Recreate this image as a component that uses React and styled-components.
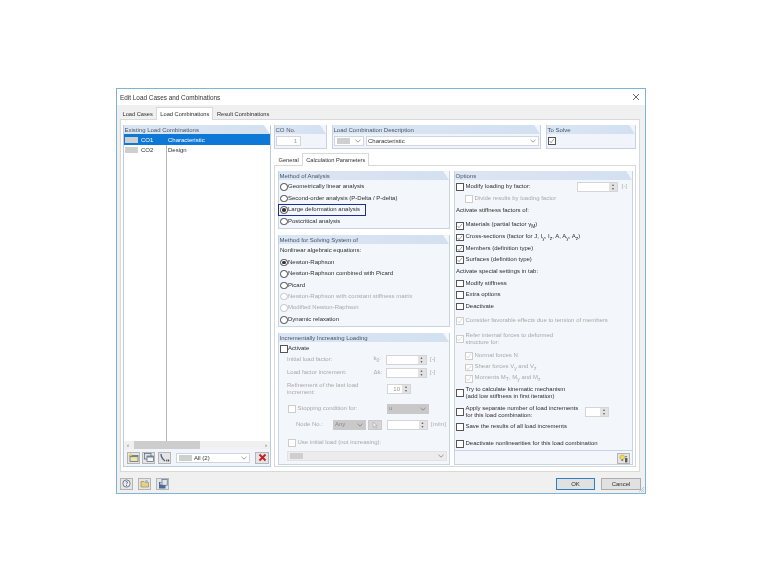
import React from "react";
import styled, { createGlobalStyle } from "styled-components";

const GlobalStyle = createGlobalStyle`
  html, body { margin: 0; padding: 0; background: #fff; }
  body {
    padding: 88px 0 0 116px;
    font-family: "Liberation Sans", Arial, sans-serif;
    font-size: 6px;
    color: #2e2e2e;
  }
`;

const Window = styled.div`
  position: relative;
  box-sizing: border-box;
  width: 530px;
  height: 406px;
  border: 1px solid #7db4d8;
  background: #f0f0f0;
  display: flex;
  flex-direction: column;
  filter: blur(0.25px);
`;

const TitleBar = styled.div`
  height: 16px;
  flex: none;
  background: #fff;
  display: flex;
  align-items: center;
  justify-content: space-between;
  padding: 0 5px 0 3px;
  font-size: 6.4px;
  color: #333;
`;

const TabStrip = styled.div`
  height: 14px;
  flex: none;
  display: flex;
  align-items: flex-end;
  padding-left: 2px;
`;

const Tab = styled.div`
  box-sizing: border-box;
  height: ${(p) => (p.$active ? "13px" : "11px")};
  padding: 0 ${(p) => (p.$active ? "3px" : "2.5px")};
  display: flex;
  align-items: center;
  font-size: 5.7px;
  background: ${(p) => (p.$active ? "#fff" : "transparent")};
  border: 1px solid ${(p) => (p.$active ? "#d9d9d9" : "transparent")};
  border-bottom: none;
  white-space: nowrap;
  margin-bottom: ${(p) => (p.$active ? "-1px" : "0")};
  position: relative;
  z-index: 1;
`;

const Page = styled.div`
  box-sizing: border-box;
  height: 353px;
  flex: none;
  margin: 0 5px 0 3px;
  background: #fff;
  border: 1px solid #d9d9d9;
  padding: 5px 3px 0 2px;
  display: flex;
  gap: 3px;
`;

const LeftPanel = styled.div`
  box-sizing: border-box;
  width: 148px;
  height: 342px;
  flex: none;
  border: 1px solid #bccbe2;
  border-top: none;
  display: flex;
  flex-direction: column;
`;

const Head = styled.div`
  box-sizing: border-box;
  height: 9px;
  flex: none;
  padding-left: 0.5px;
  display: flex;
  align-items: center;
  white-space: nowrap;
  color: #44546a;
  background: linear-gradient(90deg, #dbe6f3, #d3e0f0);
  clip-path: polygon(0 0, calc(100% - 6px) 0, 100% 100%, 0 100%);
`;

const List = styled.div`
  flex: 1;
  background: linear-gradient(90deg, #fff 42px, #b5b5b5 42px, #b5b5b5 43px, #fff 43px);
`;

const ListRow = styled.div`
  height: ${(p) => (p.$selected ? 11 : 10)}px;
  display: flex;
  align-items: center;
  background: ${(p) => (p.$selected ? "#0d78d6" : "transparent")};
  color: ${(p) => (p.$selected ? "#fff" : "#333")};
`;

const Swatch = styled.span`
  display: inline-block;
  flex: none;
  width: 13px;
  height: 6px;
  background: #cfcfcf;
  margin: 0 2px 0 1px;
`;

const IdCell = styled.span`
  width: 25px;
  flex: none;
  padding-left: 1px;
`;

const NameCell = styled.span`
  padding-left: 2px;
`;

const Scrollbar = styled.div`
  height: 8px;
  flex: none;
  background: #f0f0f0;
  display: flex;
  align-items: center;
  justify-content: space-between;
  position: relative;
  padding: 0 3px;
  color: #555;
`;

const Thumb = styled.div`
  position: absolute;
  left: 10px;
  top: 0;
  width: 66px;
  height: 8px;
  background: #cdcdcd;
`;

const ToolRow = styled.div`
  height: 17px;
  flex: none;
  display: flex;
  align-items: center;
  padding: 0 2px 0 3px;
  gap: 2px;
  background: #f1f5fb;
`;

const IconBtn = styled.div`
  box-sizing: border-box;
  width: ${(p) => p.$w || 13}px;
  height: ${(p) => p.$hh || 12}px;
  flex: none;
  border: 1px solid ${(p) => (p.$off ? "#c9c9c9" : "#b5b5b5")};
  background: ${(p) => (p.$off ? "#d5d5d5" : "#e4e4e4")};
  display: flex;
  align-items: center;
  justify-content: center;
  margin-left: ${(p) => p.$ml || 0}px;
`;

const Combo = styled.div`
  box-sizing: border-box;
  width: ${(p) => (p.$w ? `${p.$w}px` : "auto")};
  height: ${(p) => p.$hh || 10}px;
  flex: ${(p) => (p.$w ? "none" : "1")};
  background: ${(p) => (p.$off ? "#c9c9c9" : p.$muted ? "#ececec" : "#fff")};
  border: 1px solid ${(p) => (p.$off ? "#c9c9c9" : p.$muted ? "#e2e2e2" : "#cfd6e0")};
  display: flex;
  align-items: center;
  padding: 0 2px 0 1px;
  color: ${(p) => (p.$off ? "#8a8a8a" : "#333")};
  margin-left: ${(p) => p.$ml || 0}px;
`;

const Chevron = styled.svg`
  margin-left: auto;
  flex: none;
`;

const RightCol = styled.div`
  flex: 1;
  min-width: 0;
  display: flex;
  flex-direction: column;
`;

const TopRow = styled.div`
  display: flex;
  gap: 5px;
  height: 24px;
  flex: none;
`;

const TopBox = styled.div`
  box-sizing: border-box;
  width: ${(p) => p.$w}px;
  flex: none;
  height: 24px;
  display: flex;
  flex-direction: column;
  background: #f1f5fb;
  border: 1px solid #c6d3e6;
  border-top: none;
`;

const TopBody = styled.div`
  flex: 1;
  display: flex;
  align-items: center;
  padding: 0 1px;
  gap: 2px;
`;

const NumberBox = styled.div`
  box-sizing: border-box;
  width: 25px;
  height: 10px;
  background: #fff;
  border: 1px solid #d5d5d5;
  color: #999;
  text-align: right;
  padding-right: 3px;
  line-height: 8px;
`;

const InnerTabs = styled.div`
  height: 16px;
  flex: none;
  display: flex;
  align-items: flex-end;
  padding-left: 1px;
`;

const InnerPanel = styled.div`
  box-sizing: border-box;
  width: 362px;
  height: 302px;
  flex: none;
  border: 1px solid #d9d9d9;
  padding: 5px 2px 0 3px;
  display: grid;
  grid-template-columns: 172px 179px;
  column-gap: 4px;
`;

const Column = styled.div`
  display: flex;
  flex-direction: column;
  gap: 6px;
  min-width: 0;
`;

const Group = styled.div`
  box-sizing: border-box;
  height: ${(p) => p.$h}px;
  flex: none;
  display: flex;
  flex-direction: column;
  background: #f3f6fb;
  border: 1px solid #c6d3e6;
  border-top: none;
`;

const GroupBody = styled.div`
  flex: 1;
  display: flex;
  flex-direction: column;
  padding: 1px 1px 0 1px;
`;

const Row = styled.div`
  box-sizing: border-box;
  height: ${(p) => p.$h || 12}px;
  flex: none;
  display: flex;
  align-items: center;
  gap: ${(p) => (p.$tight ? 0.5 : 1.5)}px;
  white-space: nowrap;
  line-height: 7.5px;
  padding-left: ${(p) => p.$indent || 0}px;
  margin-top: ${(p) => p.$mt || 0}px;
  color: ${(p) => (p.$off ? "#a9a9a9" : "#2e2e2e")};
`;

const Focus = styled.span`
  display: inline-flex;
  align-items: center;
  gap: 0.5px;
  height: 10px;
  outline: 1.2px solid #1b2f8f;
  padding-left: 1px;
  margin-left: -1px;
  width: 86px;
  box-sizing: border-box;
`;

const RadioMark = styled.span`
  box-sizing: border-box;
  width: 7.5px;
  height: 7.5px;
  flex: none;
  border-radius: 50%;
  border: 0.7px solid ${(p) => (p.$off ? "#c4c4c4" : "#444")};
  background: #fff;
  display: flex;
  align-items: center;
  justify-content: center;
  &::after {
    content: "";
    width: 3.6px;
    height: 3.6px;
    border-radius: 50%;
    background: ${(p) => (p.$on ? "#333" : "transparent")};
  }
`;

const CheckMark = styled.span`
  box-sizing: border-box;
  width: 7.5px;
  height: 7.5px;
  flex: none;
  border: 0.7px solid ${(p) => (p.$off ? "#cdcdcd" : "#555")};
  background: #fff;
  color: ${(p) => (p.$off ? "#bbb" : "#555")};
  display: flex;
  align-items: center;
  justify-content: center;
  margin-right: ${(p) => (p.$tight ? 0 : 0.5)}px;
`;

const Spin = styled.div`
  box-sizing: border-box;
  width: ${(p) => p.$w || 41}px;
  height: 10px;
  flex: none;
  display: flex;
  background: #fff;
  border: 1px solid #d5d5d5;
  color: #999;
  margin-left: ${(p) => p.$ml || 0}px;
`;

const SpinValue = styled.span`
  flex: 1;
  text-align: right;
  padding-right: 2px;
  line-height: 8px;
`;

const SpinArrows = styled.span`
  width: 8px;
  flex: none;
  background: #e2e2e2;
  color: #666;
  font-size: 3.5px;
  line-height: 4px;
  text-align: center;
`;

const Unit = styled.span`
  color: #a9a9a9;
  margin-left: 2px;
`;

const Label = styled.span`
  width: ${(p) => p.$w}px;
  flex: none;
  display: ${(p) => (p.$inline ? "flex" : "block")};
  align-items: center;
  gap: 1.5px;
`;

const GroupFoot = styled.div`
  height: 14px;
  flex: none;
  margin-top: auto;
  border-top: 1px solid #c6d3e6;
  display: flex;
  align-items: center;
  justify-content: flex-end;
  padding-right: 2px;
`;

const Footer = styled.div`
  flex: 1;
  display: flex;
  align-items: center;
  padding: 2px 3px 0;
  gap: 5px;
`;

const Button = styled.div`
  box-sizing: border-box;
  width: ${(p) => p.$w || 40}px;
  height: 12px;
  display: flex;
  align-items: center;
  justify-content: center;
  background: #e1e1e1;
  border: 1px solid ${(p) => (p.$primary ? "#2b7fc4" : "#adadad")};
  margin-left: ${(p) => p.$ml || 0}px;
`;

const Grip = styled.svg`
  position: absolute;
  right: 0;
  bottom: 0;
`;

const Tick = () => (
  <svg width="6" height="6" viewBox="0 0 6 6">
    <path d="M0.6 3 L2.2 4.9 L5.6 0.5" fill="none" stroke="currentColor" strokeWidth="0.6" />
  </svg>
);

const Check = ({ on, off, tight }) => (
  <CheckMark $off={off} $tight={tight}>
    {on && <Tick />}
  </CheckMark>
);

const Down = () => (
  <Chevron width="6" height="4" viewBox="0 0 6 4">
    <path d="M0.5 0.8 L3 3.2 L5.5 0.8" fill="none" stroke="#777" strokeWidth="0.7" />
  </Chevron>
);

const Spinner = ({ w, value, ml }) => (
  <Spin $w={w} $ml={ml}>
    <SpinValue>{value}</SpinValue>
    <SpinArrows>▲<br />▼</SpinArrows>
  </Spin>
);

const RadioRow = ({ on, off, focus, children, h }) =>
  focus ? (
    <Row $h={h}>
      <Focus>
        <RadioMark $on={on} />
        {children}
      </Focus>
    </Row>
  ) : (
    <Row $h={h} $off={off} $tight>
      <RadioMark $on={on} $off={off} />
      {children}
    </Row>
  );

const CheckRow = ({ on, off, indent, h, mt, children }) => (
  <Row $h={h} $mt={mt} $off={off} $indent={indent}>
    <Check on={on} off={off} />
    <span>{children}</span>
  </Row>
);

const FolderNew = () => (
  <svg width="10" height="9" viewBox="0 0 10 9">
    <rect x="1" y="2.5" width="8" height="6" fill="#f3e3a4" stroke="#55606e" strokeWidth="0.7" />
    <rect x="1" y="2.5" width="8" height="1.6" fill="#6f8399" />
    <circle cx="1.8" cy="1.6" r="1.3" fill="#f4d94e" />
  </svg>
);

const Windows = () => (
  <svg width="10" height="9" viewBox="0 0 10 9">
    <rect x="0.5" y="0.5" width="6.5" height="5.5" fill="#dfe6ee" stroke="#55606e" strokeWidth="0.7" />
    <rect x="3" y="3" width="6.5" height="5.5" fill="#f6f6f6" stroke="#55606e" strokeWidth="0.7" />
    <rect x="3" y="3" width="6.5" height="1.5" fill="#6f8399" />
  </svg>
);

const Load = () => (
  <svg width="11" height="10" viewBox="0 0 11 10">
    <path d="M2 1 C2 4 3.5 6 6 8" fill="none" stroke="#4c6078" strokeWidth="1.3" />
    <rect x="7.2" y="6.6" width="1.2" height="1.8" fill="#444" />
    <rect x="9" y="6.6" width="1.2" height="1.8" fill="#444" />
  </svg>
);

const Cross = () => (
  <svg width="9" height="9" viewBox="0 0 9 9">
    <path d="M1.5 1.5 L7.5 7.5 M7.5 1.5 L1.5 7.5" stroke="#c4202a" strokeWidth="1.9" />
  </svg>
);

const HelpIcon = () => (
  <svg width="9" height="9" viewBox="0 0 9 9">
    <circle cx="4.5" cy="4.5" r="3.6" fill="#eef1f5" stroke="#55606e" strokeWidth="0.8" />
    <path d="M3.4 3.2 C3.8 2.2 5.6 2.4 5.5 3.5 C5.4 4.3 4.5 4.3 4.4 5.4" fill="none" stroke="#2e4f83" strokeWidth="0.8" />
    <rect x="4" y="6" width="0.9" height="0.9" fill="#2e4f83" />
  </svg>
);

const OpenIcon = () => (
  <svg width="10" height="9" viewBox="0 0 10 9">
    <path d="M1 2.5 H4 L5 3.5 H8.5 V8 H1 Z" fill="#e9d27c" stroke="#8b8256" strokeWidth="0.6" />
    <circle cx="6.5" cy="2.4" r="1.5" fill="#9fb5cf" />
  </svg>
);

const SaveIcon = () => (
  <svg width="10" height="10" viewBox="0 0 10 10">
    <rect x="1" y="3" width="6.5" height="6.5" fill="#4a6a9c" />
    <rect x="2.4" y="3.4" width="3.6" height="2.2" fill="#eef1f5" />
    <rect x="4" y="0.6" width="5.2" height="5.6" fill="#dfe6ee" stroke="#4a5a70" strokeWidth="0.6" />
  </svg>
);

const DefaultsIcon = () => (
  <svg width="10" height="9" viewBox="0 0 10 9">
    <circle cx="3.3" cy="3.2" r="2.3" fill="#f4dc4e" stroke="#a08d2a" strokeWidth="0.4" />
    <rect x="2.4" y="5.4" width="1.8" height="1.6" fill="#777" />
    <rect x="6.4" y="2" width="1.2" height="1.2" fill="#444" />
    <rect x="6" y="4" width="2.4" height="4.4" fill="#5a5a5a" />
  </svg>
);

const PickIcon = () => (
  <svg width="8" height="8" viewBox="0 0 8 8">
    <path d="M2 1 L2 6.5 L3.4 5.2 L4.6 7.4 L5.6 6.9 L4.4 4.8 L6.2 4.6 Z" fill="#eee" stroke="#999" strokeWidth="0.5" />
  </svg>
);

const analysis = [
  { label: "Geometrically linear analysis", h: 12 },
  { label: "Second-order analysis (P-Delta / P-delta)", h: 11 },
  { label: "Large deformation analysis", on: true, focus: true, h: 12 },
  { label: "Postcritical analysis", h: 11 },
];

const solvers = [
  { label: "Newton-Raphson", on: true, h: 11 },
  { label: "Newton-Raphson combined with Picard", h: 12 },
  { label: "Picard", h: 11 },
  { label: "Newton-Raphson with constant stiffness matrix", off: true, h: 11 },
  { label: "Modified Newton-Raphson", off: true, h: 12 },
  { label: "Dynamic relaxation", h: 12 },
];

function App() {
  return (
    <>
      <GlobalStyle />
      <Window>
        <TitleBar>
          <span>Edit Load Cases and Combinations</span>
          <svg width="8" height="8" viewBox="0 0 8 8">
            <path d="M1 1 L7 7 M7 1 L1 7" stroke="#444" strokeWidth="0.8" />
          </svg>
        </TitleBar>
        <TabStrip>
          <Tab>Load Cases</Tab>
          <Tab $active>Load Combinations</Tab>
          <Tab>Result Combinations</Tab>
        </TabStrip>
        <Page>
          <LeftPanel>
            <Head>Existing Load Combinations</Head>
            <List>
              <ListRow $selected>
                <Swatch />
                <IdCell>CO1</IdCell>
                <NameCell>Characteristic</NameCell>
              </ListRow>
              <ListRow>
                <Swatch />
                <IdCell>CO2</IdCell>
                <NameCell>Design</NameCell>
              </ListRow>
            </List>
            <Scrollbar>
              <Thumb />
              <span>‹</span>
              <span>›</span>
            </Scrollbar>
            <ToolRow>
              <IconBtn><FolderNew /></IconBtn>
              <IconBtn><Windows /></IconBtn>
              <IconBtn $ml={1}><Load /></IconBtn>
              <Combo $w={74} $ml={3}>
                <Swatch />
                All (2)
                <Down />
              </Combo>
              <IconBtn $w={14} $ml={3}><Cross /></IconBtn>
            </ToolRow>
          </LeftPanel>
          <RightCol>
            <TopRow>
              <TopBox $w={53}>
                <Head>CO No.</Head>
                <TopBody><NumberBox>1</NumberBox></TopBody>
              </TopBox>
              <TopBox $w={209}>
                <Head>Load Combination Description</Head>
                <TopBody>
                  <Combo $w={30}><Swatch /><Down /></Combo>
                  <Combo>Characteristic<Down /></Combo>
                </TopBody>
              </TopBox>
              <TopBox $w={90}>
                <Head>To Solve</Head>
                <TopBody><Check on /></TopBody>
              </TopBox>
            </TopRow>
            <InnerTabs>
              <Tab>General</Tab>
              <Tab $active>Calculation Parameters</Tab>
            </InnerTabs>
            <InnerPanel>
              <Column>
                <Group $h={58}>
                  <Head>Method of Analysis</Head>
                  <GroupBody>
                    {analysis.map((a) => (
                      <RadioRow key={a.label} on={a.on} focus={a.focus} h={a.h}>{a.label}</RadioRow>
                    ))}
                  </GroupBody>
                </Group>
                <Group $h={92}>
                  <Head>Method for Solving System of</Head>
                  <GroupBody>
                    <Row>Nonlinear algebraic equations:</Row>
                    {solvers.map((s) => (
                      <RadioRow key={s.label} on={s.on} off={s.off} h={s.h}>{s.label}</RadioRow>
                    ))}
                  </GroupBody>
                </Group>
                <Group $h={132}>
                  <Head>Incrementally Increasing Loading</Head>
                  <GroupBody>
                    <Row $tight>
                      <Check tight />
                      <span>Activate</span>
                    </Row>
                    <Row $off $h={10} $indent={7}>
                      <Label $w={85}>Initial load factor:</Label>
                      <Label $w={10.5}>k<sub>0</sub>:</Label>
                      <Spinner />
                      <Unit>[-]</Unit>
                    </Row>
                    <Row $off $mt={2} $indent={7}>
                      <Label $w={85}>Load factor increment:</Label>
                      <Label $w={10.5}>Δk:</Label>
                      <Spinner />
                      <Unit>[-]</Unit>
                    </Row>
                    <Row $off $h={16} $mt={2} $indent={7}>
                      <Label $w={98.5}>Refinement of the last load<br />increment:</Label>
                      <Spinner w={24} value="10" />
                    </Row>
                    <Row $off $mt={6} $indent={8}>
                      <Label $inline $w={97.5}>
                        <Check off />
                        <span>Stopping condition for:</span>
                      </Label>
                      <Combo $off $w={42}>u<Down /></Combo>
                    </Row>
                    <Row $off $h={14} $mt={3} $indent={16}>
                      <Label $w={35.5}>Node No.:</Label>
                      <Combo $off $w={33}>Any<Down /></Combo>
                      <IconBtn $off $w={14} $hh={10}><PickIcon /></IconBtn>
                      <Spinner w={41} ml={3.5} />
                      <Unit>[m/m]</Unit>
                    </Row>
                    <CheckRow off indent={8} mt={5}>Use initial load (not increasing):</CheckRow>
                    <Row $off $mt={1} $indent={7}>
                      <Combo $muted $w={160}>
                        <Swatch />
                        <Down />
                      </Combo>
                    </Row>
                  </GroupBody>
                </Group>
              </Column>
              <Column>
                <Group $h={294}>
                  <Head>Options</Head>
                  <GroupBody>
                    <Row>
                      <Check />
                      <Label $w={110}>Modify loading by factor:</Label>
                      <Spinner />
                      <Unit>[-]</Unit>
                    </Row>
                    <CheckRow off indent={9}>Divide results by loading factor</CheckRow>
                    <Row>Activate stiffness factors of:</Row>
                    <CheckRow on mt={3}>Materials (partial factor γ<sub>M</sub>)</CheckRow>
                    <CheckRow on h={11}>Cross-sections (factor for J, I<sub>y</sub>, I<sub>z</sub>, A, A<sub>y</sub>, A<sub>z</sub>)</CheckRow>
                    <CheckRow on h={11}>Members (definition type)</CheckRow>
                    <CheckRow on>Surfaces (definition type)</CheckRow>
                    <Row>Activate special settings in tab:</Row>
                    <CheckRow h={11}>Modify stiffness</CheckRow>
                    <CheckRow>Extra options</CheckRow>
                    <CheckRow h={11}>Deactivate</CheckRow>
                    <CheckRow on off mt={3}>Consider favorable effects due to tension of members</CheckRow>
                    <CheckRow on off h={16} mt={4}>Refer internal forces to deformed<br />structure for:</CheckRow>
                    <CheckRow on off indent={9} mt={3}>Normal forces N</CheckRow>
                    <CheckRow on off indent={9} h={11}>Shear forces V<sub>y</sub> and V<sub>z</sub></CheckRow>
                    <CheckRow on off indent={9}>Moments M<sub>T</sub>, M<sub>y</sub> and M<sub>z</sub></CheckRow>
                    <CheckRow h={16}>Try to calculate kinematic mechanism<br />(add low stiffness in first iteration)</CheckRow>
                    <Row $h={16} $mt={3}>
                      <Check />
                      <Label $w={118}>Apply separate number of load increments<br />for this load combination:</Label>
                      <Spinner w={24} />
                    </Row>
                    <CheckRow mt={1}>Save the results of all load increments</CheckRow>
                    <CheckRow mt={5}>Deactivate nonlinearities for this load combination</CheckRow>
                  </GroupBody>
                  <GroupFoot>
                    <IconBtn $w={13} $hh={11}><DefaultsIcon /></IconBtn>
                  </GroupFoot>
                </Group>
              </Column>
            </InnerPanel>
          </RightCol>
        </Page>
        <Footer>
          <IconBtn><HelpIcon /></IconBtn>
          <IconBtn><OpenIcon /></IconBtn>
          <IconBtn><SaveIcon /></IconBtn>
          <Button $primary $w={39} $ml={382}>OK</Button>
          <Button $ml={1}>Cancel</Button>
        </Footer>
        <Grip width="8" height="8" viewBox="0 0 8 8">
          <path d="M7 2 L2 7 M7 4 L4 7 M7 6 L6 7" stroke="#9fb8c8" strokeWidth="0.7" />
        </Grip>
      </Window>
    </>
  );
}

export default App;
